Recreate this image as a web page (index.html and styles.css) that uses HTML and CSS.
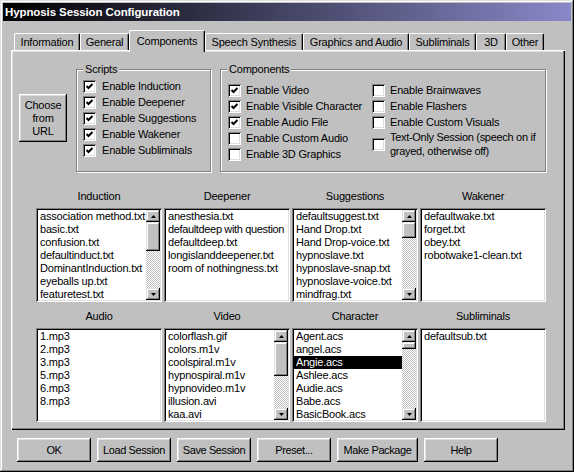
FILE: index.html
```html
<!DOCTYPE html>
<html>
<head>
<meta charset="utf-8">
<link rel="stylesheet" href="styles.css">
</head>
<body>
<div class="window">
  <div class="titlebar">Hypnosis Session Configuration</div>
  <div class="tabs">
    <div class="tab t-info">Information</div>
    <div class="tab t-gen">General</div>
    <div class="tab t-comp selected">Components</div>
    <div class="tab t-speech">Speech Synthesis</div>
    <div class="tab t-gfx">Graphics and Audio</div>
    <div class="tab t-sub">Subliminals</div>
    <div class="tab t-3d">3D</div>
    <div class="tab t-other">Other</div>
  </div>
  <div class="panel">
    <div class="top-row">
      <div class="btn url-btn">Choose<br>from<br>URL</div>
      <div class="group scripts">
        <span class="legend">Scripts</span>
        <div class="check-row"><span class="box"><svg width="13" height="13" viewBox="0 0 13 13"><polyline points="3.5,6 5.5,8 9.5,4" fill="none" stroke="#000" stroke-width="2"/></svg></span>Enable Induction</div>
        <div class="check-row"><span class="box"><svg width="13" height="13" viewBox="0 0 13 13"><polyline points="3.5,6 5.5,8 9.5,4" fill="none" stroke="#000" stroke-width="2"/></svg></span>Enable Deepener</div>
        <div class="check-row"><span class="box"><svg width="13" height="13" viewBox="0 0 13 13"><polyline points="3.5,6 5.5,8 9.5,4" fill="none" stroke="#000" stroke-width="2"/></svg></span>Enable Suggestions</div>
        <div class="check-row"><span class="box"><svg width="13" height="13" viewBox="0 0 13 13"><polyline points="3.5,6 5.5,8 9.5,4" fill="none" stroke="#000" stroke-width="2"/></svg></span>Enable Wakener</div>
        <div class="check-row"><span class="box"><svg width="13" height="13" viewBox="0 0 13 13"><polyline points="3.5,6 5.5,8 9.5,4" fill="none" stroke="#000" stroke-width="2"/></svg></span>Enable Subliminals</div>
      </div>
      <div class="group components">
        <span class="legend">Components</span>
        <div class="comp-col col1">
          <div class="check-row"><span class="box"><svg width="13" height="13" viewBox="0 0 13 13"><polyline points="3.5,6 5.5,8 9.5,4" fill="none" stroke="#000" stroke-width="2"/></svg></span>Enable Video</div>
          <div class="check-row"><span class="box"><svg width="13" height="13" viewBox="0 0 13 13"><polyline points="3.5,6 5.5,8 9.5,4" fill="none" stroke="#000" stroke-width="2"/></svg></span>Enable Visible Character</div>
          <div class="check-row"><span class="box"><svg width="13" height="13" viewBox="0 0 13 13"><polyline points="3.5,6 5.5,8 9.5,4" fill="none" stroke="#000" stroke-width="2"/></svg></span>Enable Audio File</div>
          <div class="check-row"><span class="box"></span>Enable Custom Audio</div>
          <div class="check-row"><span class="box"></span>Enable 3D Graphics</div>
        </div>
        <div class="comp-col col2">
          <div class="check-row"><span class="box"></span>Enable Brainwaves</div>
          <div class="check-row"><span class="box"></span>Enable Flashers</div>
          <div class="check-row"><span class="box"></span>Enable Custom Visuals</div>
          <div class="check-row tall"><span class="box"></span><span class="two-line">Text-Only Session (speech on if<br>grayed, otherwise off)</span></div>
        </div>
      </div>
    </div>

    <div class="lists">
      <div class="list-col">
        <div class="list-label">Induction</div>
        <div class="listbox">
          <div class="items">
            <div class="item">association method.txt</div>
            <div class="item">basic.txt</div>
            <div class="item">confusion.txt</div>
            <div class="item">defaultinduct.txt</div>
            <div class="item">DominantInduction.txt</div>
            <div class="item">eyeballs up.txt</div>
            <div class="item">featuretest.txt</div>
          </div>
          <div class="scrollbar">
            <div class="arrow"><svg width="5" height="3" viewBox="0 0 5 3"><polygon points="2.5,0 5,3 0,3" fill="#000"/></svg></div>
            <div class="track"><div class="thumb th-ind"></div></div>
            <div class="arrow"><svg width="5" height="3" viewBox="0 0 5 3"><polygon points="0,0 5,0 2.5,3" fill="#000"/></svg></div>
          </div>
        </div>
      </div>
      <div class="list-col">
        <div class="list-label">Deepener</div>
        <div class="listbox">
          <div class="items">
            <div class="item">anesthesia.txt</div>
            <div class="item tight">defaultdeep with question</div>
            <div class="item">defaultdeep.txt</div>
            <div class="item">longislanddeepener.txt</div>
            <div class="item">room of nothingness.txt</div>
          </div>
        </div>
      </div>
      <div class="list-col">
        <div class="list-label">Suggestions</div>
        <div class="listbox">
          <div class="items">
            <div class="item">defaultsuggest.txt</div>
            <div class="item">Hand Drop.txt</div>
            <div class="item">Hand Drop-voice.txt</div>
            <div class="item">hypnoslave.txt</div>
            <div class="item">hypnoslave-snap.txt</div>
            <div class="item">hypnoslave-voice.txt</div>
            <div class="item">mindfrag.txt</div>
          </div>
          <div class="scrollbar">
            <div class="arrow"><svg width="5" height="3" viewBox="0 0 5 3"><polygon points="2.5,0 5,3 0,3" fill="#000"/></svg></div>
            <div class="track"><div class="thumb th-sug"></div></div>
            <div class="arrow"><svg width="5" height="3" viewBox="0 0 5 3"><polygon points="0,0 5,0 2.5,3" fill="#000"/></svg></div>
          </div>
        </div>
      </div>
      <div class="list-col">
        <div class="list-label">Wakener</div>
        <div class="listbox">
          <div class="items">
            <div class="item">defaultwake.txt</div>
            <div class="item">forget.txt</div>
            <div class="item">obey.txt</div>
            <div class="item">robotwake1-clean.txt</div>
          </div>
        </div>
      </div>

      <div class="list-col">
        <div class="list-label">Audio</div>
        <div class="listbox">
          <div class="items">
            <div class="item">1.mp3</div>
            <div class="item">2.mp3</div>
            <div class="item">3.mp3</div>
            <div class="item">5.mp3</div>
            <div class="item">6.mp3</div>
            <div class="item">8.mp3</div>
          </div>
        </div>
      </div>
      <div class="list-col">
        <div class="list-label">Video</div>
        <div class="listbox">
          <div class="items">
            <div class="item">colorflash.gif</div>
            <div class="item">colors.m1v</div>
            <div class="item">coolspiral.m1v</div>
            <div class="item">hypnospiral.m1v</div>
            <div class="item">hypnovideo.m1v</div>
            <div class="item">illusion.avi</div>
            <div class="item">kaa.avi</div>
          </div>
          <div class="scrollbar">
            <div class="arrow"><svg width="5" height="3" viewBox="0 0 5 3"><polygon points="2.5,0 5,3 0,3" fill="#000"/></svg></div>
            <div class="track"><div class="thumb th-vid"></div></div>
            <div class="arrow"><svg width="5" height="3" viewBox="0 0 5 3"><polygon points="0,0 5,0 2.5,3" fill="#000"/></svg></div>
          </div>
        </div>
      </div>
      <div class="list-col">
        <div class="list-label">Character</div>
        <div class="listbox">
          <div class="items">
            <div class="item">Agent.acs</div>
            <div class="item">angel.acs</div>
            <div class="item sel">Angie.acs</div>
            <div class="item">Ashlee.acs</div>
            <div class="item">Audie.acs</div>
            <div class="item">Babe.acs</div>
            <div class="item">BasicBook.acs</div>
          </div>
          <div class="scrollbar">
            <div class="arrow"><svg width="5" height="3" viewBox="0 0 5 3"><polygon points="2.5,0 5,3 0,3" fill="#000"/></svg></div>
            <div class="track"><div class="thumb th-chr"></div></div>
            <div class="arrow"><svg width="5" height="3" viewBox="0 0 5 3"><polygon points="0,0 5,0 2.5,3" fill="#000"/></svg></div>
          </div>
        </div>
      </div>
      <div class="list-col">
        <div class="list-label">Subliminals</div>
        <div class="listbox">
          <div class="items">
            <div class="item">defaultsub.txt</div>
          </div>
        </div>
      </div>
    </div>
  </div>
  <div class="buttons">
    <div class="btn dlg">OK</div>
    <div class="btn dlg">Load Session</div>
    <div class="btn dlg">Save Session</div>
    <div class="btn dlg">Preset...</div>
    <div class="btn dlg wide">Make Package</div>
    <div class="btn dlg">Help</div>
  </div>
</div>
</body>
</html>
```
FILE: styles.css
```css
* { box-sizing: border-box; }
html, body { margin: 0; padding: 0; }
body {
  width: 574px;
  height: 472px;
  overflow: hidden;
  background: #c0c0c0;
  font-family: "Liberation Sans", Arial, sans-serif;
  font-size: 11px;
  letter-spacing: -0.2px;
  color: #000;
}
.window {
  width: 574px;
  height: 472px;
  padding: 3px;
  background: #c0c0c0;
  box-shadow: inset -1px -1px #000, inset 1px 1px #dfdfdf, inset -2px -2px #808080, inset 2px 2px #fff;
  display: flex;
  flex-direction: column;
}
.titlebar {
  height: 18px;
  flex: none;
  background: linear-gradient(to right, #000 0%, #8888c8 100%);
  color: #fff;
  font-weight: bold;
  font-size: 11.5px;
  letter-spacing: -0.1px;
  line-height: 18px;
  padding-left: 2px;
}
.tabs {
  display: flex;
  align-items: flex-end;
  height: 20px;
  flex: none;
  margin-top: 9px;
  margin-left: 11px;
  position: relative;
  z-index: 2;
}
.tab {
  height: 17px;
  padding-top: 1px;
  line-height: 15px;
  text-align: center;
  background: #c0c0c0;
  border-left: 1px solid #fff;
  border-top: 1px solid #fff;
  border-right: 1px solid #000;
  border-radius: 2px 2px 0 0;
  box-shadow: inset -1px 0 #808080;
  white-space: nowrap;
}
.tab.selected {
  height: 22px;
  padding-top: 3px;
  margin-bottom: -2px;
}
.t-info { width: 66px; }
.t-gen { width: 49px; }
.t-comp { width: 76px; }
.t-speech { width: 98px; }
.t-gfx { width: 106px; }
.t-sub { width: 67px; }
.t-3d { width: 30px; }
.t-other { width: 38px; }

.panel {
  flex: none;
  width: 554px;
  height: 380px;
  margin-left: 8px;
  box-shadow: inset 1px 1px #fff, inset -1px -1px #000, inset -2px -2px #808080, inset 2px 2px #dfdfdf;
  position: relative;
  z-index: 1;
}
.top-row {
  display: flex;
  align-items: flex-start;
  padding-top: 19px;
  padding-left: 8px;
}
.btn {
  background: #c0c0c0;
  box-shadow: inset -1px -1px #000, inset 1px 1px #fff, inset -2px -2px #808080, inset 2px 2px #dfdfdf;
  text-align: center;
}
.url-btn {
  width: 48px;
  height: 48px;
  margin-top: 25px;
  padding-top: 5px;
  line-height: 13px;
}
.group {
  position: relative;
  height: 103px;
  border: 1px solid #808080;
  box-shadow: inset 1px 1px #fff, 1px 1px #fff;
}
.legend {
  position: absolute;
  top: -7px;
  left: 6px;
  padding: 0 2px;
  background: #c0c0c0;
  line-height: 13px;
}
.scripts {
  width: 135px;
  margin-left: 9px;
  padding-top: 8px;
  padding-left: 6px;
}
.components {
  width: 326px;
  margin-left: 9px;
  padding-top: 12px;
  padding-left: 7px;
  display: flex;
}
.check-row {
  display: flex;
  align-items: center;
  height: 16px;
  gap: 6px;
  white-space: nowrap;
}
.components .check-row { gap: 5px; }
.check-row.tall { height: 28px; }
.two-line { line-height: 14px; letter-spacing: -0.3px; }
.box {
  flex: none;
  width: 13px;
  height: 13px;
  background: #fff;
  box-shadow: inset 1px 1px #808080, inset -1px -1px #fff, inset 2px 2px #000, inset -2px -2px #dfdfdf;
}
.box svg { display: block; }
.col1 { width: 144px; }

.lists {
  display: grid;
  grid-template-columns: repeat(4, 126px);
  column-gap: 2px;
  row-gap: 8px;
  margin-top: 18px;
  margin-left: 25px;
}
.list-label {
  height: 13px;
  line-height: 13px;
  text-align: center;
  margin-bottom: 5px;
}
.listbox {
  height: 94px;
  background: #fff;
  padding: 2px;
  display: flex;
  box-shadow: inset 1px 1px #808080, inset -1px -1px #fff, inset 2px 2px #000, inset -2px -2px #dfdfdf;
}
.items {
  flex: 1;
  min-width: 0;
  overflow: hidden;
}
.item {
  height: 13px;
  line-height: 13px;
  padding-left: 2px;
  white-space: nowrap;
  overflow: hidden;
}
.item.tight { letter-spacing: -0.35px; }
.item.sel {
  background: #000;
  color: #fff;
}
.scrollbar {
  flex: none;
  width: 14px;
  display: flex;
  flex-direction: column;
}
.arrow {
  height: 12px;
  flex: none;
  display: flex;
  align-items: center;
  justify-content: center;
  background: #c0c0c0;
  box-shadow: inset -1px -1px #000, inset 1px 1px #dfdfdf, inset -2px -2px #808080, inset 2px 2px #fff;
}
.arrow svg { display: block; }
.track {
  flex: 1;
  background-color: #c0c0c0;
  background-image: repeating-conic-gradient(#fff 0 25%, #c0c0c0 0 50%);
  background-size: 2px 2px;
}
.thumb {
  background: #c0c0c0;
  box-shadow: inset -1px -1px #000, inset 1px 1px #dfdfdf, inset -2px -2px #808080, inset 2px 2px #fff;
}
.th-ind { height: 29px; }
.th-sug { height: 16px; }
.th-vid { height: 34px; }
.th-chr { height: 7px; }

.buttons {
  display: flex;
  gap: 6px;
  margin-top: 8px;
  margin-left: 14px;
}
.dlg {
  width: 74px;
  height: 24px;
  line-height: 24px;
  white-space: nowrap;
  letter-spacing: -0.4px;
}
.dlg.wide { width: 81px; }
```
